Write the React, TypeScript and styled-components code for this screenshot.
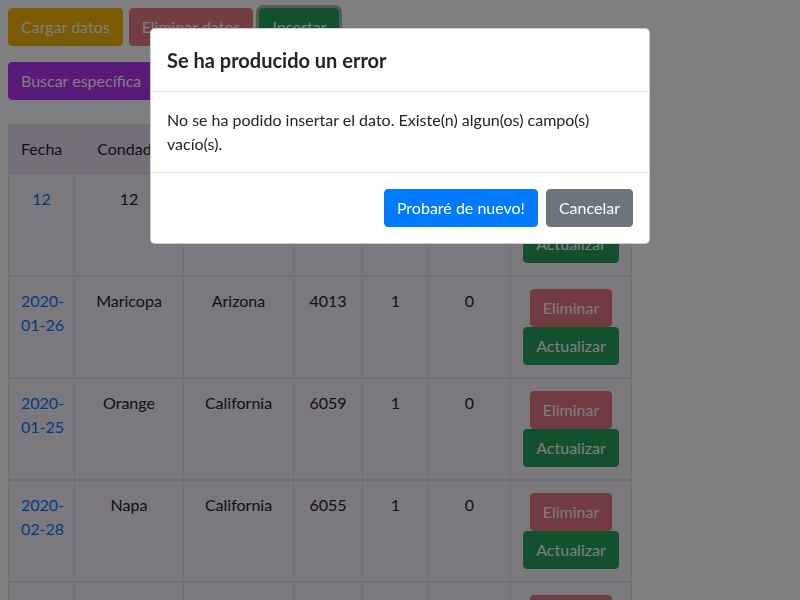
import React from 'react';
import styled, { createGlobalStyle, css } from 'styled-components';

interface Caso {
  fecha: string;
  condado: string;
  estado: string;
  fips: string;
  casos: number;
  muertes: number;
}

const casos: Caso[] = [
  { fecha: '12', condado: '12', estado: '12', fips: '12', casos: 12, muertes: 12 },
  { fecha: '2020-01-26', condado: 'Maricopa', estado: 'Arizona', fips: '4013', casos: 1, muertes: 0 },
  { fecha: '2020-01-25', condado: 'Orange', estado: 'California', fips: '6059', casos: 1, muertes: 0 },
  { fecha: '2020-02-28', condado: 'Napa', estado: 'California', fips: '6055', casos: 1, muertes: 0 },
  { fecha: '2020-01-24', condado: 'Cook', estado: 'Illinois', fips: '17031', casos: 1, muertes: 0 },
];

const columnas = [
  { titulo: 'Fecha', ancho: 66 },
  { titulo: 'Condado', ancho: 109 },
  { titulo: 'Estado', ancho: 110 },
  { titulo: 'FIPS', ancho: 69 },
  { titulo: 'Casos', ancho: 66 },
  { titulo: 'Muertes', ancho: 82 },
  { titulo: 'Acciones', ancho: 121 },
];

const partirFecha = (f: string) => {
  const i = f.indexOf('-');
  if (i < 0) return [f];
  return [f.slice(0, i + 1), f.slice(i + 1)];
};

export default function App() {
  return (
    <>
      <GlobalStyle />
      <Page>
        <Toolbar>
          <Button $variant="warning">Cargar datos</Button>
          <Button $variant="danger" disabled>Eliminar datos</Button>
          <Button $variant="success" $focused>Insertar</Button>
        </Toolbar>
        <Toolbar>
          <Button $variant="purple">Buscar específica</Button>
        </Toolbar>

        <Table>
          <colgroup>
            {columnas.map(c => <col key={c.titulo} style={{ width: c.ancho }} />)}
          </colgroup>
          <thead>
            <tr>
              {columnas.map(c => <Th key={c.titulo}>{c.titulo}</Th>)}
            </tr>
          </thead>
          <tbody>
            {casos.map((c, i) => (
              <tr key={i}>
                <Td>
                  <DateLink href="#">
                    {partirFecha(c.fecha).map(p => <DatePart key={p}>{p}</DatePart>)}
                  </DateLink>
                </Td>
                <Td>{c.condado}</Td>
                <Td>{c.estado}</Td>
                <Td>{c.fips}</Td>
                <Td>{c.casos}</Td>
                <Td>{c.muertes}</Td>
                <Td>
                  <Actions>
                    <Button $variant="danger" disabled>Eliminar</Button>
                    <Button $variant="success">Actualizar</Button>
                  </Actions>
                </Td>
              </tr>
            ))}
          </tbody>
        </Table>
      </Page>

      <Backdrop>
        <Dialog>
          <ModalHeader>
            <ModalTitle>Se ha producido un error</ModalTitle>
          </ModalHeader>
          <ModalBody>
            No se ha podido insertar el dato. Existe(n) algun(os) campo(s) vacío(s).
          </ModalBody>
          <ModalFooter>
            <Button $variant="primary">Probaré de nuevo!</Button>
            <Button $variant="secondary">Cancelar</Button>
          </ModalFooter>
        </Dialog>
      </Backdrop>
    </>
  );
}

const GlobalStyle = createGlobalStyle`
  html, body {
    margin: 0;
    background: #ffffff;
    font-family: Lato, "Liberation Sans", sans-serif;
    font-size: 16px;
    line-height: 1.5;
    color: #212529;
    overflow: hidden;
  }
  *, *::before, *::after { box-sizing: border-box; }
`;

const variants = {
  warning: '#f7b50c',
  danger: '#dc3545',
  success: '#26a35c',
  purple: '#b234f4',
  primary: '#007bff',
  secondary: '#6c757d',
};

const Button = styled.button<{ $variant: keyof typeof variants; $focused?: boolean }>`
  display: inline-block;
  padding: 6px 12px;
  font-family: inherit;
  font-size: 16px;
  line-height: 1.5;
  border-radius: 4px;
  border: 1px solid ${p => variants[p.$variant]};
  background: ${p => variants[p.$variant]};
  color: #ffffff;
  white-space: nowrap;
  cursor: pointer;
  &:disabled { opacity: 0.65; }
  ${p => p.$focused && css`
    box-shadow: 0 0 0 3px rgba(120, 130, 128, 0.6);
  `}
`;

const Page = styled.div`
  padding: 8px;
`;

const Toolbar = styled.div`
  display: flex;
  gap: 6px;
  margin-bottom: 16px;
`;

const Table = styled.table`
  margin-top: 24px;
  width: 623px;
  table-layout: fixed;
  border-collapse: collapse;
  background: #f6f0fd;
  border: 1px solid #dee2e6;
`;

const Th = styled.th`
  padding: 12px;
  font-weight: 400;
  text-align: center;
  background: #ecdef4;
  border: 1px solid #dee2e6;
  border-bottom-width: 2px;
  white-space: nowrap;
  overflow: hidden;
`;

const Td = styled.td`
  padding: 12px;
  text-align: center;
  vertical-align: top;
  border: 1px solid #dee2e6;
  border-bottom-width: 2px;
  white-space: nowrap;
`;

const DateLink = styled.a`
  color: #007bff;
  text-decoration: none;
`;

const DatePart = styled.span`
  display: block;
`;

const Actions = styled.div`
  display: flex;
  flex-direction: column;
  align-items: center;
`;

const Backdrop = styled.div`
  position: fixed;
  inset: 0;
  background: rgba(0, 0, 0, 0.5);
`;

const Dialog = styled.div`
  width: 500px;
  margin: 28px auto;
  background: #ffffff;
  border: 1px solid rgba(0, 0, 0, 0.2);
  border-radius: 5px;
  display: flex;
  flex-direction: column;
`;

const ModalHeader = styled.div`
  padding: 16px;
  border-bottom: 1px solid #dee2e6;
`;

const ModalTitle = styled.h5`
  margin: 0;
  font-size: 20px;
  font-weight: 700;
  line-height: 1.5;
  color: #212529;
`;

const ModalBody = styled.div`
  padding: 16px;
`;

const ModalFooter = styled.div`
  display: flex;
  justify-content: flex-end;
  gap: 8px;
  padding: 16px;
  border-top: 1px solid #dee2e6;
`;
